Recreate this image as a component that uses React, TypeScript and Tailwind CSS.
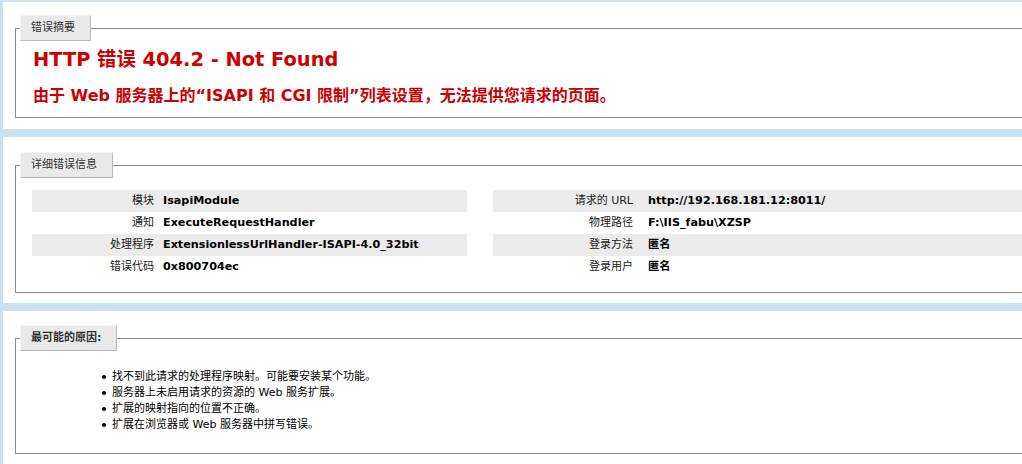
import React from "react";

function Legend({ children, bold = false }: { children: React.ReactNode; bold?: boolean }) {
  return (
    <legend
      className={`ml-[4px] h-[26px] border-t border-l border-t-[#f4f4f4] border-l-[#f4f4f4] border-b border-r border-b-[#b8b8b8] border-r-[#b8b8b8] bg-[#e9e9e9] pl-[10px] pr-[15px] text-[11px] leading-[24px] text-[#333] ${bold ? "font-bold" : "font-normal"}`}
    >
      {children}
    </legend>
  );
}

const left = [
  ["模块", "IsapiModule"],
  ["通知", "ExecuteRequestHandler"],
  ["处理程序", "ExtensionlessUrlHandler-ISAPI-4.0_32bit"],
  ["错误代码", "0x800704ec"],
];

const right = [
  ["请求的 URL", "http://192.168.181.12:8011/"],
  ["物理路径", "F:\\IIS_fabu\\XZSP"],
  ["登录方法", "匿名"],
  ["登录用户", "匿名"],
];

const causes = [
  "找不到此请求的处理程序映射。可能要安装某个功能。",
  "服务器上未启用请求的资源的 Web 服务扩展。",
  "扩展的映射指向的位置不正确。",
  "扩展在浏览器或 Web 服务器中拼写错误。",
];

function Table({ rows, labelW, gap, width }: { rows: string[][]; labelW: string; gap: string; width: string }) {
  return (
    <div className={`flex flex-col ${width}`}>
      {rows.map(([k, v], i) => (
        <div key={k} className={`flex h-[22px] items-center ${i % 2 === 0 ? "bg-[#ebebeb]" : ""}`}>
          <div className={`${labelW} shrink-0 text-right text-[11px] text-[#222]`}>{k}</div>
          <div className={`${gap} text-[11.2px] font-bold text-black`}>{v}</div>
        </div>
      ))}
    </div>
  );
}

export default function App() {
  return (
    <div className="h-[464px] w-full overflow-hidden bg-[#CBE1EF] pl-[3px] pt-[2px] font-['DejaVu_Sans','Noto_Sans_CJK_SC',sans-serif] text-[11px] text-[#222]">
      <section className="h-[127px] w-[1100px] bg-white pl-[12px] pt-[13px]">
        <fieldset className="h-[103px] border border-[#8a8a8a]">
          <Legend>错误摘要</Legend>
          <div className="pl-[17px] pt-[7px]">
            <h2 className="text-[19.4px] font-bold leading-[24px] text-[#CC0000]">HTTP 错误 404.2 - Not Found</h2>
            <h3 className="mt-[14px] text-[16px] font-bold leading-[20px] text-[#CC0000]">
              由于 Web 服务器上的“ISAPI 和 CGI 限制”列表设置，无法提供您请求的页面。
            </h3>
          </div>
        </fieldset>
      </section>

      <section className="mt-[8px] h-[166px] w-[1100px] bg-white pl-[12px] pt-[15px]">
        <fieldset className="h-[141px] border border-[#8a8a8a]">
          <Legend>详细错误信息</Legend>
          <div className="flex gap-[26px] pl-[16px] pt-[12px]">
            <Table rows={left} labelW="w-[122px]" gap="pl-[9px]" width="w-[435px]" />
            <Table rows={right} labelW="w-[140px]" gap="pl-[15px]" width="w-[560px]" />
          </div>
        </fieldset>
      </section>

      <section className="mt-[8px] h-[160px] w-[1100px] bg-white pl-[12px] pt-[14px]">
        <fieldset className="h-[129px] border border-[#8a8a8a]">
          <Legend bold>最可能的原因:</Legend>
          <ul className="pl-[86px] pt-[18px]">
            {causes.map((c) => (
              <li key={c} className="flex h-[16px] items-center text-[11px] text-black">
                <span className="mr-[6px] h-[4px] w-[4px] rounded-full bg-black" />
                {c}
              </li>
            ))}
          </ul>
        </fieldset>
      </section>
    </div>
  );
}
